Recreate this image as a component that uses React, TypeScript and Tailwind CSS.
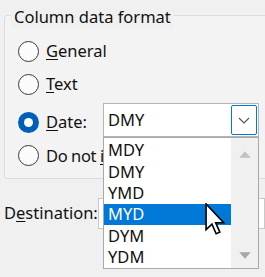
import React from "react";

function Radio({ checked }: { checked?: boolean }) {
  if (checked) {
    return (
      <div className="w-[21px] h-[21px] rounded-full bg-[#005fb8] flex items-center justify-center shrink-0">
        <div className="w-[9px] h-[9px] rounded-full bg-white" />
      </div>
    );
  }
  return <div className="w-[21px] h-[21px] rounded-full border-[1.5px] border-[#3a3a3a] bg-[#fbfbfb] shrink-0" />;
}

function Cursor() {
  return (
    <svg width="21" height="32" viewBox="0 0 13 20" className="absolute left-[205px] top-[203px]">
      <path
        d="M0.6 0.6 L0.6 16.6 L4.3 13.2 L6.9 19.2 L9.2 18.2 L6.6 12.3 L11.6 12.3 Z"
        fill="white"
        stroke="black"
        strokeWidth="1"
        strokeLinejoin="miter"
      />
    </svg>
  );
}

export default function App() {
  const items = ["MDY", "DMY", "YMD", "MYD", "DYM", "YDM"];
  return (
    <div
      className="relative w-[265px] h-[277px] overflow-hidden bg-[#f0f0f0] text-[#111] text-[16.5px] leading-none"
      style={{ fontFamily: '"Noto Sans", "Open Sans", sans-serif' }}
    >
      <div className="pt-[15px] pl-[4px]">
        <div className="relative w-[280px] h-[164px] border border-[#dcdcdc] rounded-[3px] bg-[#f3f3f3] pt-[25px] pl-[13px]">
          <div className="absolute left-[6px] top-[-10px] px-[3px] bg-[#f0f0f0] leading-[22px]">Column data format</div>
          <div className="flex flex-col">
            <div className="flex items-center h-[21px] gap-[7px]">
              <Radio />
              <span>
                <span className="underline underline-offset-2">G</span>eneral
              </span>
            </div>
            <div className="flex items-center h-[21px] gap-[7px] mt-[12px]">
              <Radio />
              <span>
                <span className="underline underline-offset-2">T</span>ext
              </span>
            </div>
            <div className="flex items-start h-[34px] mt-[8px]">
              <div className="flex items-center h-[21px] gap-[7px] mt-[9px] w-[85px]">
                <Radio checked />
                <span>
                  <span className="underline underline-offset-2">D</span>ate:
                </span>
              </div>
              <div className="w-[156px] h-[34px] border border-[#b5b5b5] bg-white flex items-center pl-[4px] pr-[1px]">
                <span className="flex-1">DMY</span>
                <div className="w-[26px] h-[30px] border border-[#0078d7] rounded-[2px] flex items-center justify-center">
                  <svg width="12" height="7" viewBox="0 0 12 7">
                    <path d="M1 1 L6 6 L11 1" fill="none" stroke="#555" strokeWidth="1.1" />
                  </svg>
                </div>
              </div>
            </div>
            <div className="flex items-center h-[21px] gap-[7px] mt-[8px] whitespace-nowrap">
              <Radio />
              <span className="w-[57px] overflow-hidden leading-[22px] tracking-[-0.4px]">
                Do not <span className="underline underline-offset-2">i</span>mport column (skip)
              </span>
            </div>
          </div>
        </div>
        <div className="flex items-center mt-[19px] h-[31px]">
          <span className="w-[99px]">
            D<span className="underline underline-offset-2">e</span>stination:
          </span>
          <div className="w-[180px] h-[31px] border border-[#c8c8c8] bg-white" />
        </div>
      </div>

      <div className="absolute left-[103px] top-[137px] w-[156px] h-[132px] border border-[#a8a8a8] bg-white flex">
        <div className="flex-1 pt-[2px]">
          {items.map((it) => (
            <div
              key={it}
              className={
                "h-[21.33px] flex items-center pl-[4px] " +
                (it === "MYD" ? "bg-[#0078d7] text-white" : "")
              }
            >
              {it}
            </div>
          ))}
        </div>
        <div className="w-[27px] bg-[#f0f0f0] flex flex-col items-center justify-between pt-[13px] pb-[9px]">
          <svg width="12" height="7" viewBox="0 0 12 7">
            <path d="M6 0.3 L11.8 6.8 L0.2 6.8 Z" fill="#c2c2c2" />
          </svg>
          <svg width="12" height="7" viewBox="0 0 12 7">
            <path d="M0.2 0.2 L11.8 0.2 L6 6.7 Z" fill="#a8a8a8" />
          </svg>
        </div>
      </div>
      <Cursor />
    </div>
  );
}
